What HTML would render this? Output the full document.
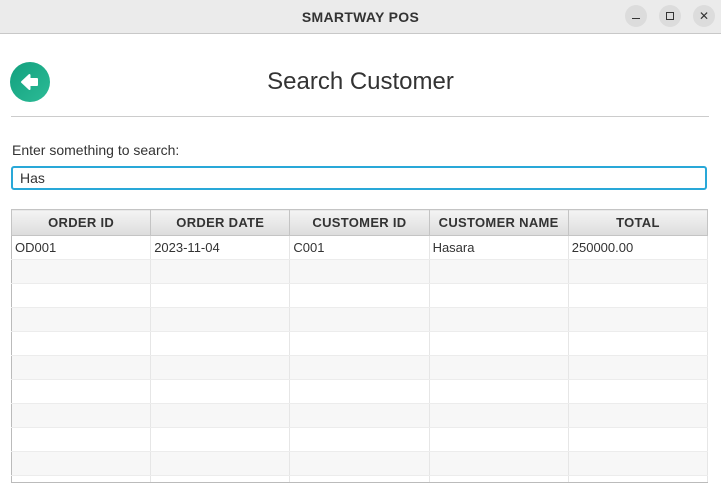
<!DOCTYPE html>
<html><head><style>
body{margin:0;width:721px;height:491px;background:#fff;font-family:"Liberation Sans","DejaVu Sans",sans-serif;position:relative;overflow:hidden}
.tb{position:absolute;left:0;top:0;width:721px;height:33px;background:#ebebeb;border-bottom:1px solid #c8c8c8}
.tb .t{position:absolute;left:0;right:0;top:9px;text-align:center;font-weight:bold;font-size:14px;color:#333;letter-spacing:.3px}
.wb{position:absolute;top:5px;width:22px;height:22px;border-radius:50%;background:#dcdcdc}
.back{position:absolute;left:10px;top:62px;width:40px;height:40px;border-radius:50%;background:linear-gradient(135deg,#12a07e,#2cbb96)}
h1{position:absolute;left:0;right:0;top:68px;margin:0;text-align:center;font-weight:normal;font-size:24px;color:#333}
.hr{position:absolute;left:11px;top:116px;width:698px;height:1px;background:#ccc}
.lbl{position:absolute;left:12px;top:142px;font-size:14px;color:#333}
.inp{position:absolute;left:11px;top:166px;height:20px;border:2px solid #29a8d8;border-radius:3px;font-size:14px;color:#333;line-height:20px;padding-left:7px;box-sizing:content-box;width:685px}
.tw{position:absolute;left:11px;top:209px;width:697px;height:273px;overflow:hidden;border-bottom:1px solid #bbb}
table{border-collapse:collapse;width:697px;border:1px solid #bbb;table-layout:fixed}
th{height:25px;background:linear-gradient(#f4f4f4,#dcdcdc);border:1px solid #c4c4c4;font-size:13px;color:#333;padding:0;letter-spacing:.3px}
td{height:23px;border-right:1px solid #e6e6e6;border-bottom:1px solid #ececec;font-size:13px;color:#333;padding:0 0 0 3px}
tr:nth-child(odd) td{background:#f7f7f7}
tr.w td{background:#fff}
</style></head><body>
<div class="tb"><div class="t">SMARTWAY POS</div>
<div class="wb" style="left:625px"><div style="position:absolute;left:7px;top:13px;width:8px;height:1px;background:#333"></div></div>
<div class="wb" style="left:659px"><div style="position:absolute;left:7px;top:7px;width:6px;height:6px;border:1px solid #333"></div></div>
<div class="wb" style="left:693px"><div style="position:absolute;left:0;top:4px;width:22px;text-align:center;font-size:12px;color:#333">✕</div></div>
</div>
<div class="back"><svg width="40" height="40" viewBox="0 0 40 40"><path d="M12 20 L19.5 13 L19.5 17 L27 17 L27 23 L19.5 23 L19.5 27 Z" fill="#fff" stroke="#fff" stroke-width="2" stroke-linejoin="round"/></svg></div>
<h1>Search Customer</h1>
<div class="hr"></div>
<div class="lbl">Enter something to search:</div>
<div class="inp">Has</div>
<div class="tw">
<table>
<tr><th>ORDER ID</th><th>ORDER DATE</th><th>CUSTOMER ID</th><th>CUSTOMER NAME</th><th>TOTAL</th></tr>
<tr class="w"><td>OD001</td><td>2023-11-04</td><td>C001</td><td>Hasara</td><td>250000.00</td></tr>
<tr><td></td><td></td><td></td><td></td><td></td></tr>
<tr class="w"><td></td><td></td><td></td><td></td><td></td></tr>
<tr><td></td><td></td><td></td><td></td><td></td></tr>
<tr class="w"><td></td><td></td><td></td><td></td><td></td></tr>
<tr><td></td><td></td><td></td><td></td><td></td></tr>
<tr class="w"><td></td><td></td><td></td><td></td><td></td></tr>
<tr><td></td><td></td><td></td><td></td><td></td></tr>
<tr class="w"><td></td><td></td><td></td><td></td><td></td></tr>
<tr><td></td><td></td><td></td><td></td><td></td></tr>
<tr class="w"><td></td><td></td><td></td><td></td><td></td></tr>
</table>
</div>
</body></html>
